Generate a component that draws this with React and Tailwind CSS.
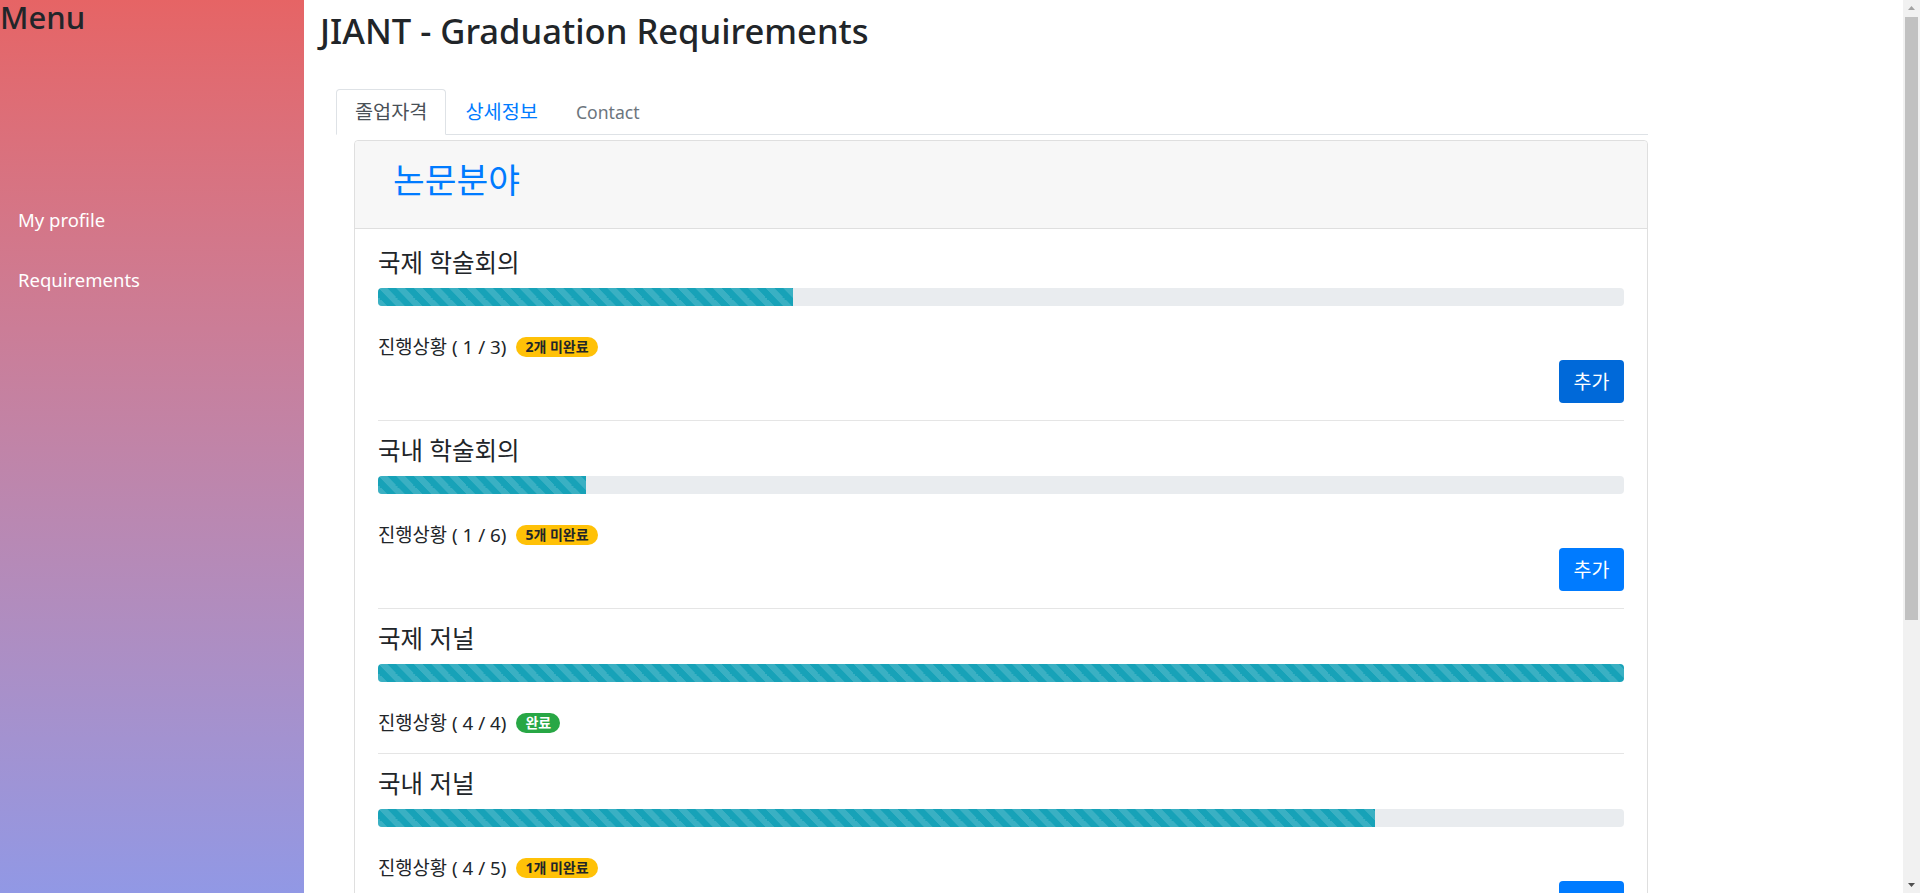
import React from "react";

const items = [
  { title: "국제 학술회의", done: 1, total: 3, button: true, pressed: true },
  { title: "국내 학술회의", done: 1, total: 6, button: true },
  { title: "국제 저널", done: 4, total: 4, button: false },
  { title: "국내 저널", done: 4, total: 5, button: true },
];

const stripes =
  "bg-[linear-gradient(45deg,rgba(255,255,255,.15)_25%,transparent_25%,transparent_50%,rgba(255,255,255,.15)_50%,rgba(255,255,255,.15)_75%,transparent_75%,transparent)] bg-[length:17.6px_17.6px]";

const Requirement = ({ title, done, total, button, pressed, first }) => {
  const left = total - done;
  return (
    <div className={first ? "" : "border-t border-[#e5e5e5] pt-[17px]"}>
      {/* Title */}
      <h5 className="text-[24.5px] leading-[26px] text-[#212529]">{title}</h5>
      {/* Progress */}
      <div className="mt-[12px] h-[18px] rounded-[4px] bg-[#e9ecef] overflow-hidden flex">
        <div
          className={`h-full bg-[#17a2b8] ${stripes}`}
          style={{ width: `${(done / total) * 100}%` }}
        />
      </div>
      {/* Status */}
      <div className="mt-[28px] flex items-center text-[18.8px] leading-[26px] text-[#212529]">
        <span>
          진행상황 ( {done} / {total})
        </span>
        {left > 0 ? (
          <span className="ml-[10px] h-[20px] px-[9px] rounded-full bg-[#ffc107] text-[#212529] text-[14px] leading-[20px] font-bold">
            {left}개 미완료
          </span>
        ) : (
          <span className="ml-[10px] h-[20px] px-[9px] rounded-full bg-[#28a745] text-white text-[14px] leading-[20px] font-bold">
            완료
          </span>
        )}
      </div>
      {/* Add button */}
      {button && (
        <div className="flex justify-end">
          <button
            className={`h-[43px] w-[65px] rounded-[4px] text-white text-[19.5px] leading-[26px] ${
              pressed ? "bg-[#0069d9]" : "bg-[#007bff]"
            }`}
          >
            추가
          </button>
        </div>
      )}
      <div className="h-[17px]" />
    </div>
  );
};

export default function App() {
  return (
    <div className="flex h-[893px] overflow-hidden bg-white text-[#212529] font-['Noto_Sans','Noto_Sans_CJK_KR',sans-serif]">
      {/* Sidebar */}
      <aside className="w-[304px] shrink-0 bg-gradient-to-b from-[#e66465] to-[#9198e5]">
        <h2 className="text-[31px] leading-[34px] font-medium">Menu</h2>
        <nav className="mt-[171px] flex flex-col gap-[30px] pl-[18px] text-[18.5px] leading-[30px] text-white">
          <a>My profile</a>
          <a>Requirements</a>
        </nav>
      </aside>

      {/* Main */}
      <main className="flex-1 min-w-0">
        <h1 className="mt-[6px] ml-[16px] text-[34.6px] leading-[50px] font-medium">
          JIANT - Graduation Requirements
        </h1>

        <div className="mt-[33px] ml-[32px] w-[1312px]">
          {/* Tabs */}
          <div className="flex border-b border-[#dee2e6] leading-[26px]">
            <div className="-mb-px h-[46px] px-[18px] flex items-center border border-[#dee2e6] border-b-white rounded-t-[4px] bg-white text-[#495057] text-[19.7px]">
              졸업자격
            </div>
            <div className="-mb-px h-[46px] px-[18px] flex items-center border border-transparent text-[#007bff] text-[19.7px]">
              상세정보
            </div>
            <div className="-mb-px h-[46px] px-[18px] flex items-center border border-transparent text-[#6c757d] text-[17.6px]">
              Contact
            </div>
          </div>

          {/* Card */}
          <div className="mt-[5px] ml-[18px] border border-[#dfdfdf] rounded-[4px]">
            <div className="h-[88px] pt-[19px] pl-[38px] bg-[#f7f7f7] border-b border-[#dfdfdf] rounded-t-[4px]">
              <h2 className="text-[34.5px] leading-[40px] text-[#007bff]">논문분야</h2>
            </div>
            <div className="pt-[21px] px-[23px]">
              {items.map((it, i) => (
                <Requirement key={it.title} {...it} first={i === 0} />
              ))}
            </div>
          </div>
        </div>
      </main>

      {/* Scrollbar */}
      <div className="w-[17px] shrink-0 bg-[#f1f1f1] flex flex-col items-center">
        <svg width="17" height="17" viewBox="0 0 17 17">
          <path d="M5 10 L8.5 6 L12 10 Z" fill="#a3a3a3" />
        </svg>
        <div className="w-[13px] h-[603px] bg-[#c1c1c1]" />
        <div className="flex-1" />
        <svg width="17" height="17" viewBox="0 0 17 17">
          <path d="M5 7 L8.5 11 L12 7 Z" fill="#505050" />
        </svg>
      </div>
    </div>
  );
}
